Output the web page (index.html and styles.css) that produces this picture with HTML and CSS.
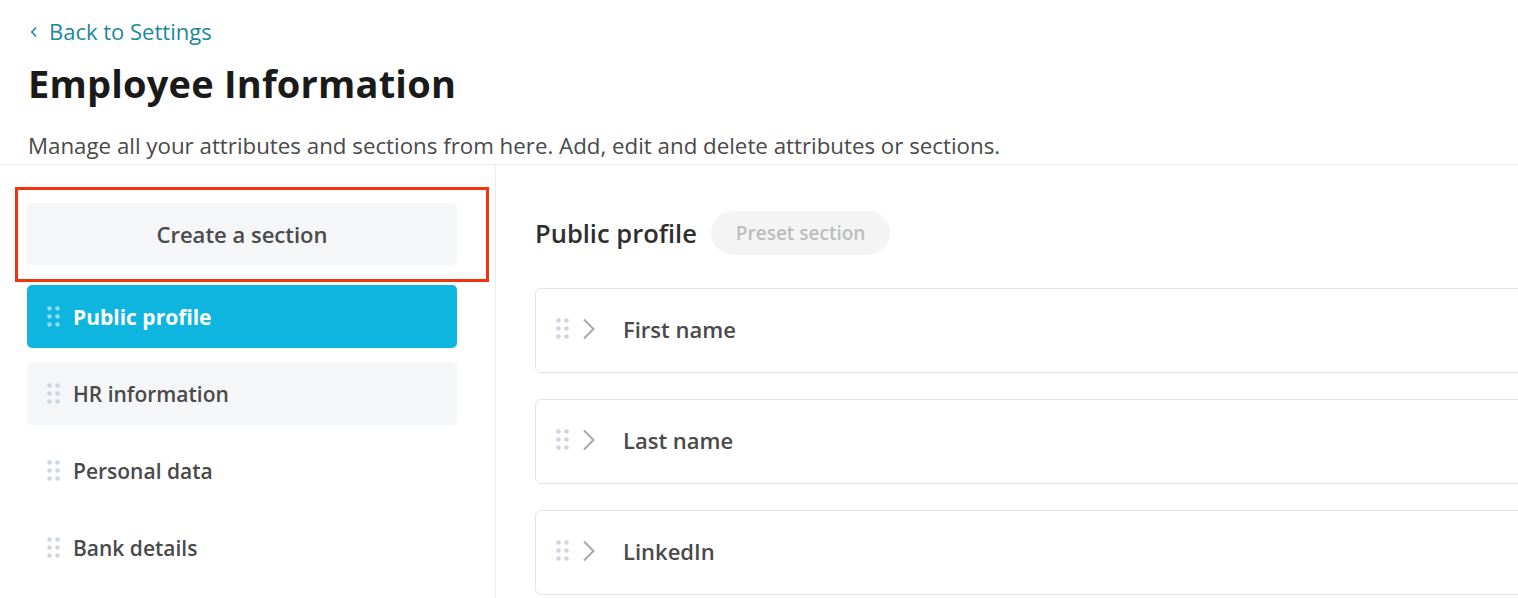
FILE: index.html
```html
<!DOCTYPE html>
<html lang="en">
<head>
    <meta charset="UTF-8">
    <meta name="viewport" content="width=device-width, initial-scale=1.0">
    <title>Employee Information</title>
    <link rel="stylesheet" href="styles.css">
</head>
<body>

    <header class="page-header">
        <a class="back-link" href="#">
            <svg class="back-icon" width="8" height="12" viewBox="0 0 8 12"><path d="M6 1.5 1.8 6 6 10.5" fill="none" stroke="currentColor" stroke-width="1.6"/></svg>
            Back to Settings
        </a>
        <h1>Employee Information</h1>
        <p class="intro">Manage all your attributes and sections from here. Add, edit and delete attributes or sections.</p>
    </header>

    <main class="layout">
        <aside class="sections">
            <button class="create-btn">Create a section</button>

            <ul class="section-list">
                <li class="section-item active">
                    <svg class="grip" width="13" height="21" viewBox="0 0 13 21"><g fill="currentColor"><circle cx="2.5" cy="2.5" r="2.3"/><circle cx="10.5" cy="2.5" r="2.3"/><circle cx="2.5" cy="10.5" r="2.3"/><circle cx="10.5" cy="10.5" r="2.3"/><circle cx="2.5" cy="18.5" r="2.3"/><circle cx="10.5" cy="18.5" r="2.3"/></g></svg>
                    Public profile
                </li>
                <li class="section-item shaded">
                    <svg class="grip" width="13" height="21" viewBox="0 0 13 21"><g fill="currentColor"><circle cx="2.5" cy="2.5" r="2.3"/><circle cx="10.5" cy="2.5" r="2.3"/><circle cx="2.5" cy="10.5" r="2.3"/><circle cx="10.5" cy="10.5" r="2.3"/><circle cx="2.5" cy="18.5" r="2.3"/><circle cx="10.5" cy="18.5" r="2.3"/></g></svg>
                    HR information
                </li>
                <li class="section-item">
                    <svg class="grip" width="13" height="21" viewBox="0 0 13 21"><g fill="currentColor"><circle cx="2.5" cy="2.5" r="2.3"/><circle cx="10.5" cy="2.5" r="2.3"/><circle cx="2.5" cy="10.5" r="2.3"/><circle cx="10.5" cy="10.5" r="2.3"/><circle cx="2.5" cy="18.5" r="2.3"/><circle cx="10.5" cy="18.5" r="2.3"/></g></svg>
                    Personal data
                </li>
                <li class="section-item">
                    <svg class="grip" width="13" height="21" viewBox="0 0 13 21"><g fill="currentColor"><circle cx="2.5" cy="2.5" r="2.3"/><circle cx="10.5" cy="2.5" r="2.3"/><circle cx="2.5" cy="10.5" r="2.3"/><circle cx="10.5" cy="10.5" r="2.3"/><circle cx="2.5" cy="18.5" r="2.3"/><circle cx="10.5" cy="18.5" r="2.3"/></g></svg>
                    Bank details
                </li>
            </ul>
        </aside>

        <section class="detail">
            <div class="detail-head">
                <h2>Public profile</h2>
                <span class="badge">Preset section</span>
            </div>

            <div class="attr-card">
                <svg class="grip" width="13" height="21" viewBox="0 0 13 21"><g fill="currentColor"><circle cx="2.5" cy="2.5" r="2.3"/><circle cx="10.5" cy="2.5" r="2.3"/><circle cx="2.5" cy="10.5" r="2.3"/><circle cx="10.5" cy="10.5" r="2.3"/><circle cx="2.5" cy="18.5" r="2.3"/><circle cx="10.5" cy="18.5" r="2.3"/></g></svg>
                <svg class="chevron" width="14" height="22" viewBox="0 0 14 22"><path d="M2 1.5 11.5 11 2 20.5" fill="none" stroke="currentColor" stroke-width="2"/></svg>
                <span>First name</span>
            </div>
            <div class="attr-card">
                <svg class="grip" width="13" height="21" viewBox="0 0 13 21"><g fill="currentColor"><circle cx="2.5" cy="2.5" r="2.3"/><circle cx="10.5" cy="2.5" r="2.3"/><circle cx="2.5" cy="10.5" r="2.3"/><circle cx="10.5" cy="10.5" r="2.3"/><circle cx="2.5" cy="18.5" r="2.3"/><circle cx="10.5" cy="18.5" r="2.3"/></g></svg>
                <svg class="chevron" width="14" height="22" viewBox="0 0 14 22"><path d="M2 1.5 11.5 11 2 20.5" fill="none" stroke="currentColor" stroke-width="2"/></svg>
                <span>Last name</span>
            </div>
            <div class="attr-card">
                <svg class="grip" width="13" height="21" viewBox="0 0 13 21"><g fill="currentColor"><circle cx="2.5" cy="2.5" r="2.3"/><circle cx="10.5" cy="2.5" r="2.3"/><circle cx="2.5" cy="10.5" r="2.3"/><circle cx="10.5" cy="10.5" r="2.3"/><circle cx="2.5" cy="18.5" r="2.3"/><circle cx="10.5" cy="18.5" r="2.3"/></g></svg>
                <svg class="chevron" width="14" height="22" viewBox="0 0 14 22"><path d="M2 1.5 11.5 11 2 20.5" fill="none" stroke="currentColor" stroke-width="2"/></svg>
                <span>LinkedIn</span>
            </div>
        </section>
    </main>

</body>
</html>
```

FILE: styles.css
```css
* { box-sizing: border-box; margin: 0; padding: 0; }
body { font-family: "Open Sans", Arial, sans-serif; background: #fff; color: #4a4a4a; overflow: hidden; }

.page-header { padding: 16px 0 0 28px; }
.back-link {
    display: inline-flex; align-items: center; gap: 11px;
    color: #1b87a0; text-decoration: none; font-size: 22px; padding-left: 2px;
}
.back-icon { margin-top: 1px; }
h1 { font-size: 38px; font-weight: 700; color: #1a1a1a; margin-top: 11px; letter-spacing: 0.2px; }
.intro { font-size: 22.3px; color: #4a4a4a; margin-top: 21px; padding-bottom: 3px; }

.layout { display: flex; border-top: 1px solid #ececec; min-height: 440px; }

.sections { width: 496px; border-right: 1px solid #ececec; padding: 38px 38px 0 27px; flex-shrink: 0; }
.create-btn {
    position: relative; display: block; width: 100%; height: 62px;
    background: #f5f6f8; border: none; border-radius: 5px;
    font: 600 22px "Open Sans", Arial, sans-serif; color: #4a4a4a; cursor: pointer;
}
/* highlight frame around the button */
.create-btn::after {
    content: ""; position: absolute;
    top: -16px; left: -12px; right: -32px; bottom: -17px;
    border: 3px solid #f2330f;
}

.section-list { list-style: none; margin-top: 20px; }
.section-item {
    display: flex; align-items: center; gap: 13px;
    height: 63px; padding-left: 20px; margin-bottom: 14px;
    border-radius: 5px; font-size: 21px; font-weight: 600; color: #4a4a4a;
}
.section-item .grip { color: #cdd6de; }
.section-item.shaded { background: #f5f6f8; }
.section-item.active { background: #0eb5df; color: #fff; font-weight: 700; }
.section-item.active .grip { color: #8fdcf0; }

.detail { flex: 1; padding: 46px 0 0 39px; }
.detail-head { display: flex; align-items: center; gap: 14px; margin-bottom: 33px; }
h2 { font-size: 25.5px; font-weight: 600; color: #2e2e2e; }
.badge {
    background: #f4f4f4; color: #bdbdbd; border-radius: 22px;
    padding: 0 25px; height: 44px; line-height: 44px;
    font-size: 19px; font-weight: 600;
}

.attr-card {
    display: flex; align-items: center;
    height: 85px; margin-right: -10px; margin-bottom: 26px;
    border: 1px solid #dfe6ea; border-radius: 6px; padding: 0 0 4px 20px;
    font-size: 22px; font-weight: 600; color: #4a4a4a;
}
.attr-card .grip { color: #cdd6de; }
.attr-card .chevron { color: #a8a8a8; margin-left: 13px; margin-right: 27px; }
```
